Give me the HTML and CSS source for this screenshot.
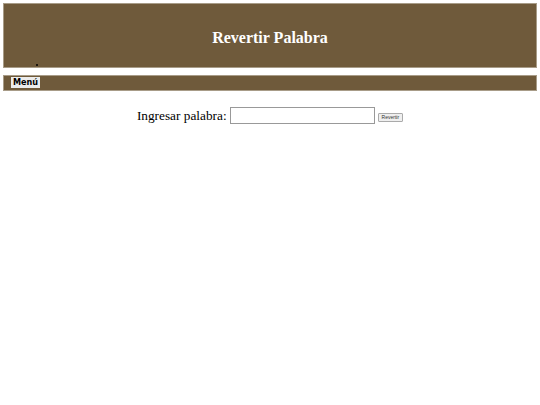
FILE: index.html
```html
<!DOCTYPE html>
<html lang="es">
<head>
<meta charset="utf-8">
<link rel="stylesheet" href="styles.css">
</head>
<body>
<header class="cabecera">
  <h1 class="titulo">Revertir Palabra</h1>
  <ul class="lista"><li></li></ul>
</header>
<nav class="menu">
  <span class="menu-boton">Menú</span>
</nav>
<form class="formulario">
  <label class="etiqueta" for="palabra">Ingresar palabra:</label>
  <input class="campo" id="palabra" type="text">
  <button class="boton" type="button">Revertir</button>
</form>
</body>
</html>
```
FILE: styles.css
```css
html, body {
  margin: 0;
  padding: 0;
  background: #ffffff;
}
body {
  padding: 3px;
  font-family: "Liberation Serif", "Times New Roman", serif;
}
.cabecera {
  background: #6f5a3b;
  border: 1px solid #a89c88;
  height: 63px;
  box-sizing: content-box;
}
.titulo {
  margin: 0;
  padding-top: 25px;
  text-align: center;
  color: #ffffff;
  font-size: 16px;
  font-weight: bold;
  line-height: 18px;
}
.lista {
  margin: 0;
  padding: 0 0 0 42px;
  list-style: disc;
  font-size: 6px;
  line-height: 8px;
  margin-top: 13px;
  color: #000;
}
.menu {
  margin-top: 7px;
  background: #6f5a3b;
  border: 1px solid #a89c88;
  height: 14px;
  display: flex;
  align-items: flex-start;
  padding-left: 7px;
}
.menu-boton {
  margin-top: 1px;
  background: #ececec;
  color: #000;
  font-family: "DejaVu Sans Condensed", "DejaVu Sans", sans-serif;
  font-weight: bold;
  font-stretch: condensed;
  font-size: 9px;
  line-height: 11px;
  padding: 0 2px;
}
.formulario {
  margin-top: 16px;
  display: flex;
  justify-content: center;
  align-items: flex-end;
  gap: 3px;
}
.etiqueta {
  font-size: 13.3px;
  line-height: 15px;
  color: #000;
  margin-bottom: 1px;
}
.campo {
  width: 141px;
  height: 13px;
  border: 1px solid #999;
  padding: 1px;
  margin: 0;
}
.boton {
  font-family: "Liberation Sans", Arial, sans-serif;
  font-size: 5px;
  padding: 1px 3px;
  height: 9px;
  margin: 0 0 2px 0;
  background: #efefef;
  border: 1px solid #aaa;
  border-radius: 1px;
  color: #333;
  line-height: 5px;
}
```
